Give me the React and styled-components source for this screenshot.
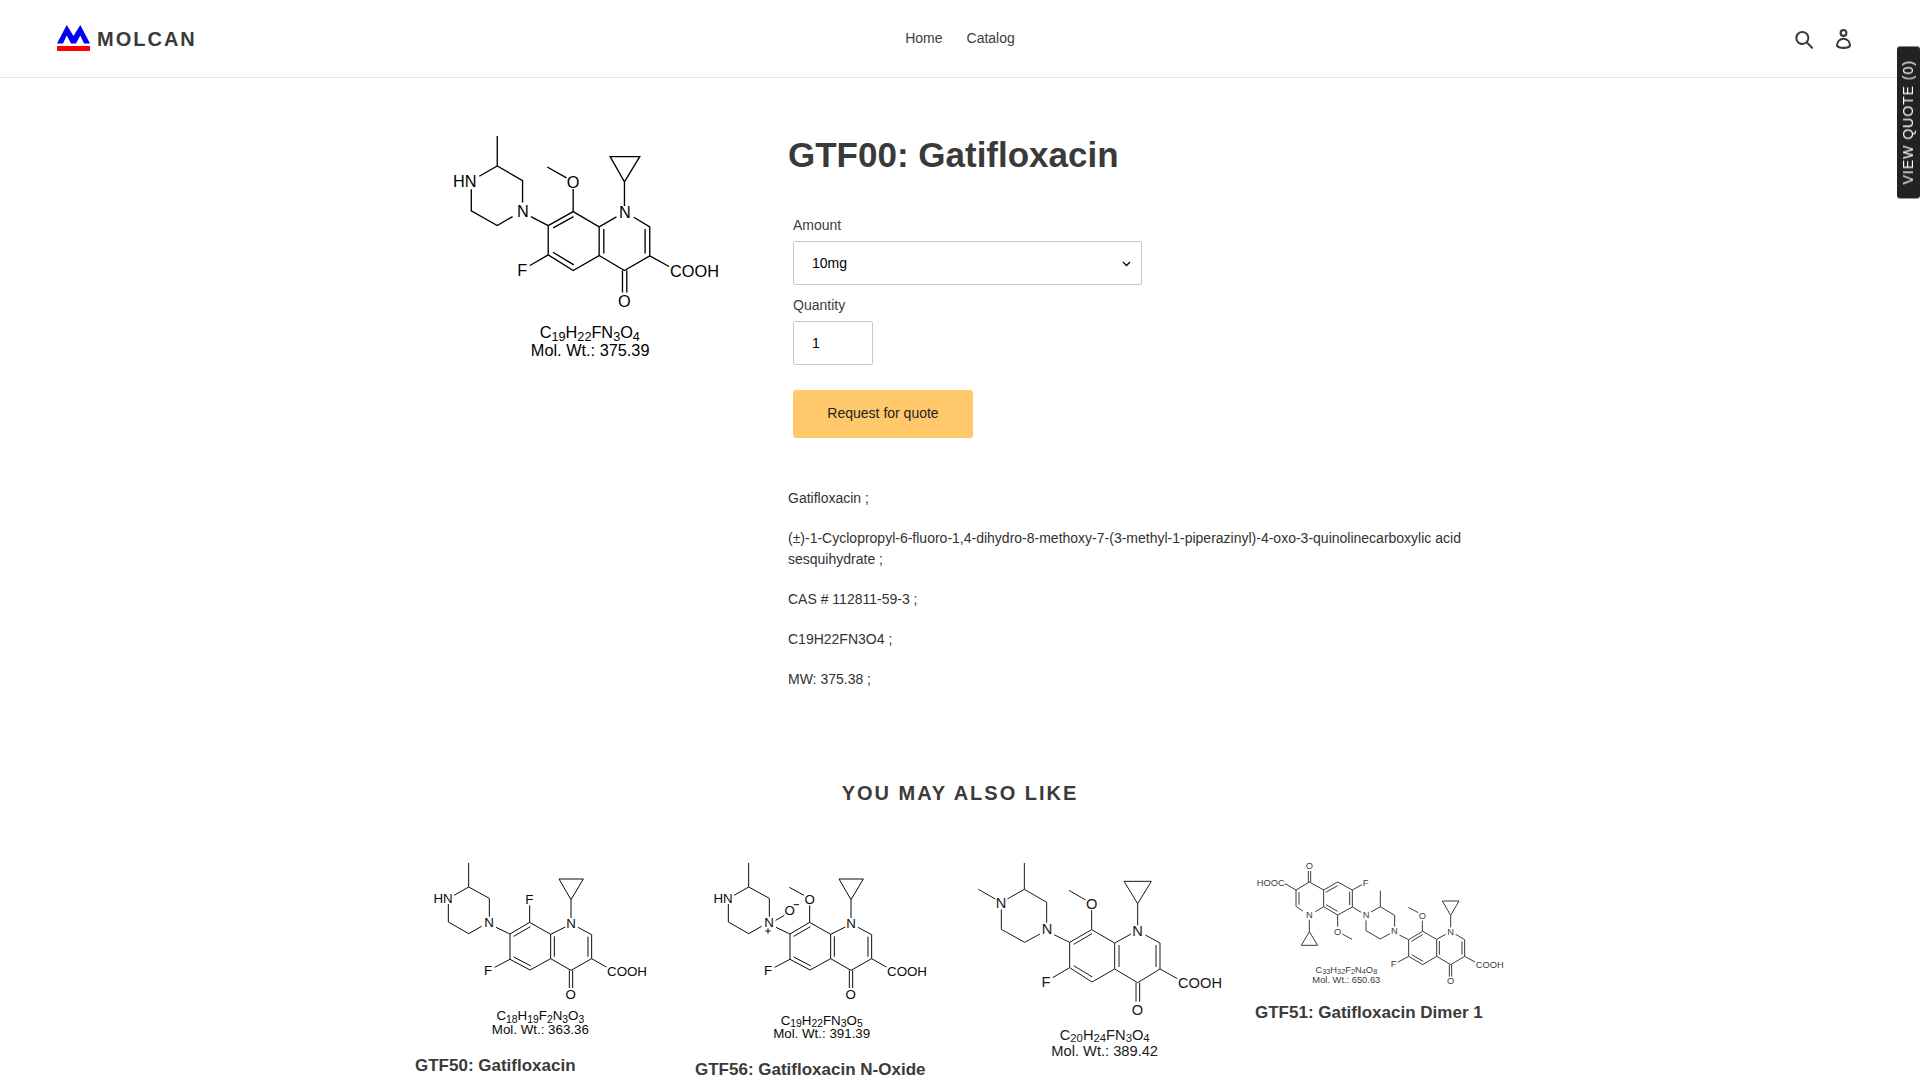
import React from "react";
import styled, { createGlobalStyle } from "styled-components";

const GlobalStyle = createGlobalStyle`
  *, *::before, *::after { box-sizing: border-box; }
  body {
    margin: 0;
    background: #fff;
    color: #333232;
    font-family: "Liberation Sans", Arial, sans-serif;
    font-size: 14px;
    line-height: 21px;
  }
`;

const Header = styled.header`
  display: grid;
  grid-template-columns: 1fr auto 1fr;
  align-items: center;
  min-height: 78px;
  padding: 0 56px;
  border-bottom: 1px solid #e3e3e3;
`;

const Brand = styled.a`
  display: flex;
  align-items: center;
  gap: 6px;
  justify-self: start;
  color: #3a3a3a;
  font-size: 20px;
  font-weight: 700;
  line-height: 24px;
  letter-spacing: 2px;
  text-decoration: none;
`;

const BrandMark = styled.svg`
  width: 35px;
  height: 28px;
`;

const Nav = styled.nav`
  display: flex;
  gap: 24px;
`;

const NavLink = styled.a`
  padding-bottom: 2px;
  color: #3d3d3d;
  line-height: 16px;
  text-decoration: none;
`;

const HeaderTools = styled.div`
  display: flex;
  justify-self: end;
`;

const IconButton = styled.button`
  display: flex;
  align-items: center;
  justify-content: center;
  width: 40px;
  height: 40px;
  padding: 0;
  border: 0;
  background: none;
  color: #3a3a3a;
  cursor: pointer;

  svg {
    height: 20px;
    fill: currentColor;
  }
`;

const QuoteTab = styled.button`
  position: fixed;
  top: 46px;
  right: 0;
  padding: 14px 3px;
  border: 0;
  border-radius: 3px;
  background: #202223;
  color: #fff;
  font-family: inherit;
  font-size: 14px;
  line-height: 17px;
  letter-spacing: 1px;
  writing-mode: vertical-rl;
  transform: rotate(180deg);
  cursor: pointer;
`;

const Page = styled.main`
  max-width: 1200px;
  margin: 0 auto;
  padding: 55px;
`;

const Product = styled.section`
  display: grid;
  grid-template-columns: minmax(0, 343fr) minmax(0, 717fr);
  gap: 30px;
  align-items: start;
`;

const ProductTitle = styled.h1`
  margin: 0 0 40px;
  color: #3a3a3a;
  font-size: 35px;
  line-height: 44px;
`;

const Form = styled.form`
  display: flex;
  flex-direction: column;
  align-items: flex-start;
  gap: 12px;
  margin: 0 0 50px;
`;

const Field = styled.div`
  display: flex;
  flex-direction: column;
  align-items: flex-start;
  gap: 8px;
  width: 50%;
  padding: 0 5px;
`;

const Label = styled.label`
  color: #3d3d3d;
  line-height: 16px;
`;

const SelectWrap = styled.div`
  position: relative;
  width: 100%;
`;

const Control = styled.input`
  display: block;
  width: ${(p) => p.$width};
  height: 44px;
  padding: 0 18px;
  border: 1px solid #c8c8c8;
  border-radius: 2px;
  background: #fff;
  color: #000;
  font-family: inherit;
  font-size: 14px;
  appearance: none;
`;

const Chevron = styled.svg`
  position: absolute;
  top: 20px;
  right: 11px;
  width: 9px;
  height: 6px;
  pointer-events: none;
`;

const SubmitButton = styled.button`
  min-width: 180px;
  height: 48px;
  margin: 13px 5px 0;
  padding: 0 34px 2px;
  border: 0;
  border-radius: 3px;
  background: #ffc96b;
  color: #222;
  font-family: inherit;
  font-size: 14px;
  cursor: pointer;
`;

const Description = styled.div`
  display: flex;
  flex-direction: column;
  gap: 19px;

  p { margin: 0; }
`;

const Related = styled.section`
  margin-top: 91px;
`;

const RelatedTitle = styled.h2`
  margin: 0 0 55px;
  color: #3a3a3a;
  font-size: 20px;
  line-height: 24px;
  letter-spacing: 2px;
  text-align: center;
  text-transform: uppercase;
`;

const CardGrid = styled.ul`
  display: grid;
  grid-template-columns: repeat(4, minmax(0, 1fr));
  gap: 30px;
  margin: 0;
  padding: 0;
  list-style: none;
`;

const CardLink = styled.a`
  display: flex;
  flex-direction: column;
  gap: 11px;
  color: #3a3a3a;
  font-size: 17px;
  font-weight: 700;
  line-height: 20px;
  text-decoration: none;
`;

const Drawing = styled.svg`
  display: block;
  width: 100%;
  color: ${(p) => p.$ink};
  font-family: "Liberation Sans", Arial, sans-serif;
  font-size: ${(p) => p.$size}px;
  font-weight: 400;

  path {
    fill: none;
    stroke: currentColor;
    stroke-width: ${(p) => p.$stroke};
  }

  text { fill: currentColor; }
`;

/* Splits "C19H22" into element symbols and their subscript counts. */
function Formula({ value, x, y, size }) {
  const parts = value.match(/[A-Z]+|\d+/g);
  const sub = Math.round(size * 0.78);
  const drop = Math.round(size * 0.17);
  return (
    <text x={x} y={y} textAnchor="middle">
      {parts.map((part, i) => {
        const isCount = /\d/.test(part);
        const dy = i === 0 ? 0 : isCount ? drop : -drop;
        return (
          <tspan key={i} dy={dy} fontSize={isCount ? sub : size}>
            {part}
          </tspan>
        );
      })}
    </text>
  );
}

function Molecule({ data, title }) {
  const { viewBox, size, stroke, ink, bonds, atoms, formula, weight } = data;
  return (
    <Drawing viewBox={viewBox} $size={size} $stroke={stroke} $ink={ink} role="img" aria-label={title}>
      <path d={bonds} />
      {atoms.map(([label, x, y, anchor = "middle"], i) => (
        <text key={i} x={x} y={y} textAnchor={anchor}>{label}</text>
      ))}
      <Formula value={formula.value} x={formula.x} y={formula.y} size={size} />
      <text x={weight.x} y={weight.y} textAnchor="middle">{weight.value}</text>
    </Drawing>
  );
}

const gatifloxacin = {
  viewBox: "-45 39 1030 700",
  size: 49,
  stroke: 4,
  ink: "#000",
  bonds: `M202 48V138 M148 169L202 138L278 182V248 M248 290L202 317L124 273V208
    M352 141L410 174 M430 207V275 M303 290L355 317
    M355 317L430 275L508 321V407L430 452L355 405Z
    M370 324L431 290 M369 397L432 435 M522 327V401
    M355 405L300 437 M508 321L560 291 M612 292L660 321V408L584 452L508 407
    M646 327V401 M578 452V518M591 452V518 M660 408L718 440
    M584 258V186L541 110H630L584 186`,
  atoms: [["HN", 140, 202, "end"], ["N", 279, 291], ["O", 430, 204], ["F", 277, 467],
    ["N", 585, 295], ["O", 584, 561], ["COOH", 721, 472, "start"]],
  formula: { value: "C19H22FN3O4", x: 480, y: 655 },
  weight: { value: "Mol. Wt.: 375.39", x: 481, y: 708 },
};

const smallCore = `M206 69V141 M162 166L206 141L268 175V230 M245 259L206 281L145 246V192
  M288 262L330 282 M330 282L389 247L452 283V356L390 390L330 358Z
  M341 289L391 260 M341 351L393 378 M463 289V350 M330 358L284 382
  M452 283L496 261 M534 262L575 284V356L513 391L452 356 M564 290V350
  M508 391V444M518 391V444 M575 356L619 381 M513 234V179L477 117H550L513 179`;

const smallAtoms = [["HN", 158, 190, "end"], ["N", 267, 260], ["F", 264, 404],
  ["N", 513, 263], ["O", 512, 478], ["COOH", 621, 407, "start"]];

const related = [
  {
    title: "GTF50: Gatifloxacin",
    molecule: {
      viewBox: "45 60 750 555",
      size: 40,
      stroke: 3,
      ink: "#0a0a0a",
      bonds: `${smallCore} M389 247V196`,
      atoms: [...smallAtoms, ["F", 388, 192]],
      formula: { value: "C18H19F2N3O3", x: 421, y: 541 },
      weight: { value: "Mol. Wt.: 363.36", x: 421, y: 582 },
    },
  },
  {
    title: "GTF56: Gatifloxacin N-Oxide",
    molecule: {
      viewBox: "45 60 750 567",
      size: 40,
      stroke: 3,
      ink: "#0a0a0a",
      bonds: `${smallCore} M328 142L372 166 M389 196V247 M287 241L313 226
        M341 194H357 M256 273H272 M264 265V281`,
      atoms: [...smallAtoms, ["O", 389, 192], ["O", 329, 226]],
      formula: { value: "C19H22FN3O5", x: 425, y: 555 },
      weight: { value: "Mol. Wt.: 391.39", x: 425, y: 595 },
    },
  },
  {
    title: "",
    molecule: {
      viewBox: "45 60 750 630",
      size: 44,
      stroke: 3,
      ink: "#1a1a1a",
      bonds: `M193 69V148 M55 148L106 177 M142 177L193 148L260 187V248
        M240 282L194 307L124 268V208 M282 284L329 307
        M329 307L395 269L464 309V387L396 426L329 383Z
        M341 313L396 281 M341 377L397 411 M477 315V381
        M327 151L377 180 M395 210V269 M329 383L278 413
        M464 309L513 282 M556 285L600 309V387L533 428L464 387 M588 315V381
        M528 428V485M539 428V485 M600 387L652 416
        M533 256V191L492 124H574L533 191`,
      atoms: [["N", 123, 203], ["N", 261, 283], ["O", 395, 206], ["F", 258, 442],
        ["N", 533, 287], ["O", 532, 524], ["COOH", 654, 445, "start"]],
      formula: { value: "C20H24FN3O4", x: 434, y: 600 },
      weight: { value: "Mol. Wt.: 389.42", x: 434, y: 647 },
    },
  },
  {
    title: "GTF51: Gatifloxacin Dimer 1",
    molecule: {
      viewBox: "45 60 750 396",
      size: 28,
      stroke: 3,
      ink: "#3a3a3a",
      bonds: `M135 131L168 150 M188 213L168 199V150L208 126L251 150V200L226 215 M177 156V194
        M205 93V126M212 93V126
        M251 150L293 126L337 150V201L293 225L251 200 M257 157L293 137 M329 155V195 M258 194L293 214
        M337 150L366 134 M337 201L364 217 M293 225V260 M307 282L336 298
        M208 240V275L184 316H233L208 275
        M393 216L421 200V152 M421 200L464 226V260 M450 281L421 297L378 272V241 M478 285L506 299
        M506 299L548 274L590 298V349L548 374L506 349Z M514 304L548 284 M515 344L549 364 M598 303V344
        M505 202L535 218 M547 242V274 M506 349L473 367
        M590 298L617 283 M647 283L674 299V349L632 374L590 349 M666 304V344
        M628 374V410M635 374V410 M674 349L705 366
        M632 262V226L607 183H657L632 226`,
      atoms: [["HOOC", 134, 137, "end"], ["O", 208, 88], ["N", 208, 235], ["F", 377, 137],
        ["N", 378, 235], ["O", 293, 284], ["N", 463, 283], ["O", 547, 237], ["F", 461, 382],
        ["N", 632, 285], ["O", 632, 433], ["COOH", 707, 384, "start"]],
      formula: { value: "C33H32F2N4O8", x: 319, y: 398 },
      weight: { value: "Mol. Wt.: 650.63", x: 319, y: 428 },
    },
  },
];

export default function App() {
  return (
    <>
      <GlobalStyle />
      <Header>
        <Brand href="#">
          <BrandMark viewBox="0 0 35 28" aria-hidden="true">
            <path fill="#0000f5" d="M1 18.5L10.7 0L17.5 11L24.3 0L34 18.5H28L24.3 10.5L20 18.5H15L10.7 10.5L7 18.5Z" />
            <path fill="#f80000" d="M1 21H34V26H1Z" />
          </BrandMark>
          MOLCAN
        </Brand>
        <Nav>
          <NavLink href="#">Home</NavLink>
          <NavLink href="#">Catalog</NavLink>
        </Nav>
        <HeaderTools>
          <IconButton type="button" aria-label="Search">
            <svg viewBox="0 0 37 40" aria-hidden="true">
              <path d="M35.6 36l-9.8-9.8c4.1-5.4 3.6-13.2-1.3-18.1-5.4-5.4-14.2-5.4-19.7 0-5.4 5.4-5.4 14.2 0 19.7 2.6 2.6 6.1 4.1 9.8 4.1 3 0 5.9-1 8.3-2.8l9.8 9.8c.4.4.9.6 1.4.6s1-.2 1.4-.6c.9-.9.9-2.1.1-2.9zm-20.9-8.2c-2.6 0-5.1-1-7-2.9-3.9-3.9-3.9-10.1 0-14C9.6 9 12.2 8 14.7 8s5.1 1 7 2.9c3.9 3.9 3.9 10.1 0 14-1.9 1.9-4.4 2.9-7 2.9z" />
            </svg>
          </IconButton>
          <IconButton type="button" aria-label="Log in">
            <svg viewBox="0 0 28.33 37.68" aria-hidden="true">
              <path d="M14.17 14.9a7.45 7.45 0 1 0-7.5-7.45 7.46 7.46 0 0 0 7.5 7.45zm0-10.91a3.45 3.45 0 1 1-3.5 3.46A3.46 3.46 0 0 1 14.17 4zM14.17 16.47A14.18 14.18 0 0 0 0 30.68c0 1.41.66 4 5.11 5.66a27.17 27.17 0 0 0 9.06 1.34c6.54 0 14.17-1.84 14.17-7a14.18 14.18 0 0 0-14.17-14.21zm0 17.21c-6.3 0-10.17-1.77-10.17-3a10.17 10.17 0 1 1 20.33 0c.01 1.23-3.86 3-10.16 3z" />
            </svg>
          </IconButton>
        </HeaderTools>
      </Header>
      <QuoteTab type="button">VIEW QUOTE (0)</QuoteTab>
      <Page>
        <Product>
          <Molecule data={gatifloxacin} title="Structure of gatifloxacin" />
          <div>
            <ProductTitle>GTF00: Gatifloxacin</ProductTitle>
            <Form onSubmit={(e) => e.preventDefault()}>
              <Field>
                <Label htmlFor="amount">Amount</Label>
                <SelectWrap>
                  <Control as="select" id="amount" $width="100%" defaultValue="10mg">
                    <option>10mg</option>
                  </Control>
                  <Chevron viewBox="0 0 9 6" aria-hidden="true">
                    <path d="M1 1L4.5 4.5L8 1" fill="none" stroke="#000" strokeWidth="1.3" />
                  </Chevron>
                </SelectWrap>
              </Field>
              <Field>
                <Label htmlFor="quantity">Quantity</Label>
                <Control id="quantity" $width="80px" type="text" inputMode="numeric" defaultValue="1" />
              </Field>
              <SubmitButton type="submit">Request for quote</SubmitButton>
            </Form>
            <Description>
              <p>Gatifloxacin ;</p>
              <p>(±)-1-Cyclopropyl-6-fluoro-1,4-dihydro-8-methoxy-7-(3-methyl-1-piperazinyl)-4-oxo-3-quinolinecarboxylic acid sesquihydrate ;</p>
              <p>CAS # 112811-59-3 ;</p>
              <p>C19H22FN3O4 ;</p>
              <p>MW: 375.38 ;</p>
            </Description>
          </div>
        </Product>
        <Related>
          <RelatedTitle>You may also like</RelatedTitle>
          <CardGrid>
            {related.map(({ title, molecule }) => (
              <li key={molecule.formula.value}>
                <CardLink href="#">
                  <Molecule data={molecule} title={molecule.formula.value} />
                  {title && <span>{title}</span>}
                </CardLink>
              </li>
            ))}
          </CardGrid>
        </Related>
      </Page>
    </>
  );
}
